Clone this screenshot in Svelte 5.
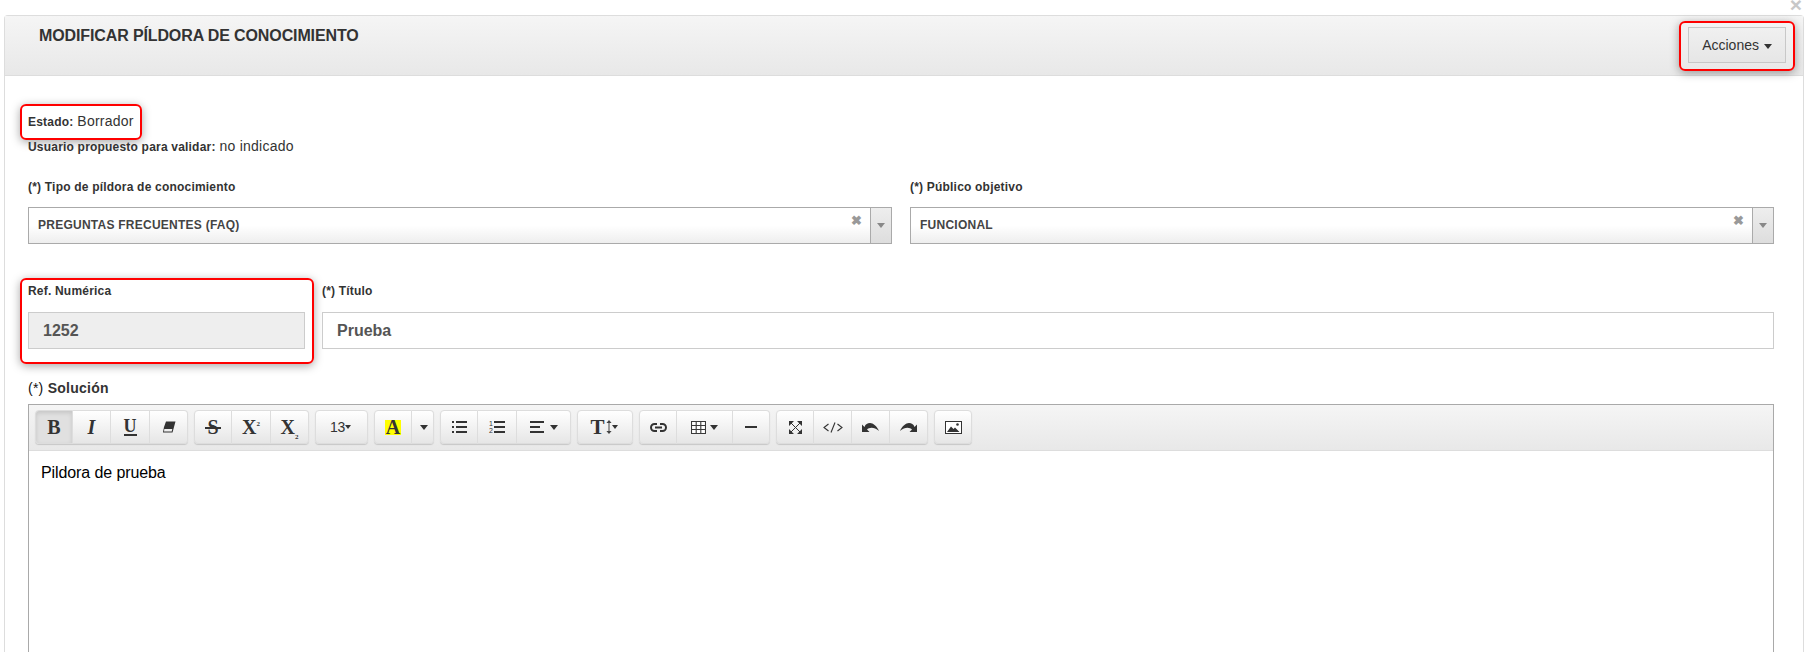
<script>
  // toolbar groups, w = button width in px
  const toolbar = [
    [
      { id: 'bold', w: 38, active: true },
      { id: 'italic', w: 38 },
      { id: 'underline', w: 39 },
      { id: 'eraser', w: 38 }
    ],
    [
      { id: 'strike', w: 38 },
      { id: 'sup', w: 39 },
      { id: 'sub', w: 38 }
    ],
    [{ id: 'size', w: 53 }],
    [
      { id: 'color', w: 38 },
      { id: 'caret', w: 22 }
    ],
    [
      { id: 'ul', w: 38 },
      { id: 'ol', w: 39 },
      { id: 'align', w: 54 }
    ],
    [{ id: 'height', w: 56 }],
    [
      { id: 'link', w: 38 },
      { id: 'table', w: 56 },
      { id: 'hr', w: 37 }
    ],
    [
      { id: 'full', w: 38 },
      { id: 'code', w: 38 },
      { id: 'undo', w: 38 },
      { id: 'redo', w: 38 }
    ],
    [{ id: 'picture', w: 38 }]
  ];
</script>

{#snippet caret()}
  <i class="caret"></i>
{/snippet}

{#snippet icon(id)}
  {#if id === 'bold'}
    <span class="serif big">B</span>
  {:else if id === 'italic'}
    <span class="serif big slant">I</span>
  {:else if id === 'underline'}
    <span class="serif under">U</span>
  {:else if id === 'eraser'}
    <svg width="14" height="12" viewBox="0 0 14 12"><path d="M4 0.5h9.5L10.5 11.5H1L2 6z" fill="#333" /><path d="M2.300 8h8l-0.600 2.600H2z" fill="#eee" /></svg>
  {:else if id === 'strike'}
    <span class="serif big strike">S</span>
  {:else if id === 'sup'}
    <span class="serif big">X<sup>2</sup></span>
  {:else if id === 'sub'}
    <span class="serif big">X<sub>2</sub></span>
  {:else if id === 'size'}
    <span class="num">13</span><i class="caret small"></i>
  {:else if id === 'color'}
    <span class="serif big marker">A</span>
  {:else if id === 'caret'}
    {@render caret()}
  {:else if id === 'ul'}
    <svg width="15" height="12" viewBox="0 0 15 12" fill="#333"><path d="M0 0h2v2H0zM0 5h2v2H0zM0 10h2v2H0zM4 0h11v2H4zM4 5h11v2H4zM4 10h11v2H4z" /></svg>
  {:else if id === 'ol'}
    <span class="ol-nums"><span>1</span><span>2</span></span>
    <svg width="11" height="12" viewBox="0 0 11 12" fill="#333"><path d="M0 0h11v2H0zM0 5h11v2H0zM0 10h11v2H0z" /></svg>
  {:else if id === 'align'}
    <svg class="align" width="14" height="12" viewBox="0 0 14 12" fill="#333"><path d="M0 0h14v2H0zM0 5h10v2H0zM0 10h14v2H0z" /></svg>{@render caret()}
  {:else if id === 'height'}
    <span class="serif tall">T</span>
    <svg width="6" height="14" viewBox="0 0 6 14"><path d="M3 0l2.6 3H3.500v8h2.100L3 14 0.400 11h2.100V3H0.400z" fill="#444" /></svg><i class="caret small"></i>
  {:else if id === 'link'}
    <svg width="17" height="9" viewBox="0 0 17 9" fill="none" stroke="#333" stroke-width="2"><path d="M7 1H4.500a3.500 3.500 0 0 0 0 7H7M10 1h2.500a3.500 3.500 0 0 1 0 7H10M5 4.500h7" /></svg>
  {:else if id === 'table'}
    <svg class="grid" width="15" height="13" viewBox="0 0 15 13" fill="#fff" stroke="#3a3a3a" stroke-width="1.1"><path d="M0.500 0.500h14v12h-14z" /><path d="M0.500 4.500h14M0.500 8.500h14M5.200 0.500v12M9.800 0.500v12" fill="none" /></svg>{@render caret()}
  {:else if id === 'hr'}
    <svg width="12" height="2" viewBox="0 0 12 2"><rect width="12" height="2" fill="#333" /></svg>
  {:else if id === 'full'}
    <svg width="13" height="13" viewBox="0 0 13 13" fill="#333"><path d="M0 0h5L0 5zM13 0v5L8 0zM0 13V8l5 5zM13 13H8l5-5z" /><path d="M2 2l9 9M11 2l-9 9" stroke="#333" stroke-width="1" /></svg>
  {:else if id === 'code'}
    <svg width="20" height="11" viewBox="0 0 20 11" fill="none" stroke="#333" stroke-width="1.1"><path d="M5.500 2L1 5.500 5.500 9M14.500 2L19 5.500 14.500 9M12 0.500L8 10.500" /></svg>
  {:else if id === 'undo'}
    <svg width="17" height="9" viewBox="0 0 17 9"><path d="M0 1.500V9h7.500L5 6.500C7 4.500 12 3.500 17 8 15 3 11 0 8 0 5.500 0 3.500 1 2.500 4z" fill="#333" /></svg>
  {:else if id === 'redo'}
    <svg width="17" height="9" viewBox="0 0 17 9"><path d="M17 1.500V9H9.500L12 6.500C10 4.500 5 3.500 0 8 2 3 6 0 9 0 11.500 0 13.500 1 14.500 4z" fill="#333" /></svg>
  {:else if id === 'picture'}
    <svg width="17" height="13" viewBox="0 0 17 13"><rect x="0.500" y="0.500" width="16" height="12" fill="#fff" stroke="#333" /><path d="M2 11l4-5.500 2.500 2.500 1.500-1.500 4.500 4.500z" fill="#333" /><circle cx="12.500" cy="3.500" r="1.300" fill="#333" /></svg>
  {/if}
{/snippet}

<span class="close">×</span>

<div class="panel">
  <header class="panel-head">
    <h2>MODIFICAR PÍLDORA DE CONOCIMIENTO</h2>
    <div class="mark mark-btn">
      <button class="actions">Acciones <i class="caret dark"></i></button>
    </div>
  </header>

  <div class="panel-body">
    <div class="status">
      <div class="mark mark-status"><b>Estado:</b> <span>Borrador</span></div>
    </div>
    <div class="status">
      <b>Usuario propuesto para validar:</b> <span>no indicado</span>
    </div>

    <div class="row selects">
      <div class="field">
        <label for="tipo">(*) Tipo de píldora de conocimiento</label>
        <div class="select" id="tipo">
          <span class="value">PREGUNTAS FRECUENTES (FAQ)</span>
          <span class="clear">✖</span>
          <span class="arrow"><i class="caret grey"></i></span>
        </div>
      </div>
      <div class="field">
        <label for="publico">(*) Público objetivo</label>
        <div class="select" id="publico">
          <span class="value">FUNCIONAL</span>
          <span class="clear">✖</span>
          <span class="arrow"><i class="caret grey"></i></span>
        </div>
      </div>
    </div>

    <div class="row inputs">
      <div class="field ref">
        <div class="mark mark-ref">
          <label for="ref">Ref. Numérica</label>
          <input id="ref" value="1252" disabled />
        </div>
      </div>
      <div class="field">
        <label for="titulo">(*) Título</label>
        <input id="titulo" value="Prueba" />
      </div>
    </div>

    <div class="solution-label"><span>(*)</span> Solución</div>
    <div class="editor">
      <div class="tools">
        {#each toolbar as group}
          <div class="group">
            {#each group as btn}
              <button class="tool" class:active={btn.active} style="width: {btn.w}px">
                {@render icon(btn.id)}
              </button>
            {/each}
          </div>
        {/each}
      </div>
      <div class="content">Pildora de prueba</div>
    </div>
  </div>
</div>

<style>
  :global(body) {
    margin: 0;
    height: 652px;
    overflow: hidden;
    background: #fff;
    font-family: 'Liberation Sans', Arial, sans-serif;
    color: #333;
  }

  .close {
    position: absolute;
    top: -7px;
    right: 6px;
    font-size: 21px;
    line-height: 24px;
    font-weight: bold;
    color: #c8c8c8;
  }

  .panel {
    margin: 15px 4px 0 4px;
    border: 1px solid #ddd;
    border-bottom: 0;
    border-radius: 4px 4px 0 0;
    height: 700px;
  }

  .panel-head {
    height: 59px;
    display: flex;
    justify-content: space-between;
    background: linear-gradient(#f5f5f5, #e8e8e8);
    border-bottom: 1px solid #ddd;
    padding: 0 16px 0 34px;
  }
  h2 {
    margin: 10px 0 0 0;
    font-size: 16px;
    line-height: 20px;
    letter-spacing: -0.12px;
    color: #333;
  }

  /* red highlights drawn on the screenshot */
  .mark {
    border: 2px solid #f00;
    border-radius: 6px;
    box-shadow: 0 2px 10px rgba(0, 0, 0, 0.35);
  }
  .mark-btn {
    margin: 5px -8px 0 0;
    padding: 4px 7px 6px 7px;
    height: 36px;
  }
  .actions {
    display: block;
    width: 98px;
    height: 36px;
    padding: 0;
    border: 1px solid #c8c8c8;
    background: linear-gradient(#f0f0f0, #e6e6e6);
    font: 14px 'Liberation Sans', Arial, sans-serif;
    color: #333;
  }

  .panel-body {
    padding: 33px 29px 0 23px;
  }

  .status {
    height: 25px;
    line-height: 25px;
    font-size: 14px;
    color: #333;
  }
  .status b {
    font-size: 12px;
    letter-spacing: 0.2px;
  }
  .status span {
    letter-spacing: 0.25px;
  }
  .mark-status {
    display: inline-block;
    margin: -6px 0 0 -8px;
    padding: 3px 6px 3px 6px;
  }

  .row {
    display: flex;
  }
  .field {
    flex: 1;
    min-width: 0;
  }
  .selects {
    gap: 18px;
    margin-top: 21px;
  }
  .inputs {
    gap: 17px;
    margin-top: 40px;
  }
  .inputs label {
    margin-bottom: 14px;
  }

  label {
    display: block;
    height: 14px;
    line-height: 14px;
    font-size: 12px;
    font-weight: bold;
    letter-spacing: 0.2px;
    color: #333;
    margin-bottom: 13px;
  }

  .select {
    position: relative;
    height: 35px;
    border: 1px solid #aaa;
    background: linear-gradient(#fff 50%, #eee);
    display: flex;
    align-items: center;
    padding-left: 9px;
    font-size: 12px;
    font-weight: bold;
    letter-spacing: 0.25px;
    color: #444;
  }
  .value {
    flex: 1;
    margin-top: -2px;
  }
  .clear {
    font-size: 13px;
    color: #999;
    margin: -10px 8px 0 0;
  }
  .arrow {
    width: 20px;
    align-self: stretch;
    border-left: 1px solid #aaa;
    background: linear-gradient(#eee, #ddd);
    display: flex;
    align-items: center;
    justify-content: center;
  }

  .field.ref {
    flex: 0 0 277px;
  }
  .mark-ref {
    margin: -6px -9px -15px -8px;
    padding: 4px 7px 13px 6px;
  }
  .ref input {
    background: #eee;
  }
  input {
    display: block;
    box-sizing: border-box;
    width: 100%;
    height: 37px;
    border: 1px solid #ccc;
    padding: 0 14px;
    font: bold 16px 'Liberation Sans', Arial, sans-serif;
    color: #555;
    background: #fff;
  }
  input:disabled {
    opacity: 1;
    color: #555;
  }

  .solution-label {
    margin-top: 29px;
    height: 20px;
    line-height: 20px;
    font-size: 14px;
    font-weight: bold;
    letter-spacing: 0.25px;
    color: #333;
  }
  .solution-label span {
    font-weight: normal;
    color: #111;
  }

  .editor {
    margin-top: 6px;
    border: 1px solid #a9a9a9;
    border-bottom: 0;
  }
  .tools {
    height: 46px;
    box-sizing: border-box;
    padding: 5px 0 0 6px;
    display: flex;
    gap: 6px;
    background: linear-gradient(#f5f5f5, #e8e8e8);
    border-bottom: 1px solid #ddd;
  }
  .group {
    display: flex;
    height: 34px;
    border-radius: 4px;
    box-shadow: 0 1px 1px rgba(0, 0, 0, 0.15);
  }
  .tool {
    box-sizing: border-box;
    height: 34px;
    padding: 0;
    border: 1px solid #ddd;
    border-left-width: 0;
    background: linear-gradient(#fff, #e6e6e6);
    display: flex;
    align-items: center;
    justify-content: center;
    color: #333;
  }
  .tool:first-child {
    border-left-width: 1px;
    border-radius: 4px 0 0 4px;
  }
  .tool:last-child {
    border-radius: 0 4px 4px 0;
  }
  .tool:only-child {
    border-radius: 4px;
  }
  .tool.active {
    background: #e0e0e0;
    box-shadow: inset 0 2px 4px rgba(0, 0, 0, 0.12);
  }

  .serif {
    font-family: 'Liberation Serif', 'Times New Roman', serif;
    font-weight: bold;
    color: #333;
  }
  .big {
    font-size: 20px;
    line-height: 20px;
  }
  .slant {
    font-style: italic;
  }
  .under {
    font-size: 18px;
    line-height: 15px;
    border-bottom: 2px solid #333;
  }
  .strike {
    position: relative;
  }
  .strike::after {
    content: '';
    position: absolute;
    left: -2px;
    right: -2px;
    top: 10px;
    height: 2px;
    background: #333;
  }
  sup,
  sub {
    font-size: 7px;
    line-height: 0;
  }
  .num {
    font: 14px 'Liberation Sans', Arial, sans-serif;
    letter-spacing: -0.3px;
    color: #333;
  }
  .marker {
    background: #ff0;
    padding: 0 1px;
    line-height: 15px;
    height: 15px;
  }
  .tall {
    font-size: 21px;
    line-height: 21px;
    margin-right: 1px;
  }
  .ol-nums {
    display: flex;
    flex-direction: column;
    font: 7px/7px 'Liberation Sans', Arial, sans-serif;
    color: #333;
    margin-right: 1px;
  }
  .align {
    margin-right: 4px;
  }
  .grid {
    margin-right: 2px;
  }

  .caret {
    display: inline-block;
    width: 0;
    height: 0;
    border: 4px solid transparent;
    border-top: 5px solid #333;
    border-bottom: 0;
    margin-left: 2px;
    vertical-align: middle;
  }
  .caret.small {
    border-width: 4px 3.5px 0 3.5px;
    border-top-color: #333;
    margin-left: 0;
    margin-right: 2px;
  }
  .caret.grey {
    border-top-color: #888;
    margin-left: 0;
  }
  .caret.dark {
    margin-left: 1px;
  }

  .content {
    padding: 12px 11px 0 12px;
    height: 300px;
    font-size: 16px;
    line-height: 20px;
    letter-spacing: -0.1px;
    color: #000;
    background: #fff;
  }
</style>
